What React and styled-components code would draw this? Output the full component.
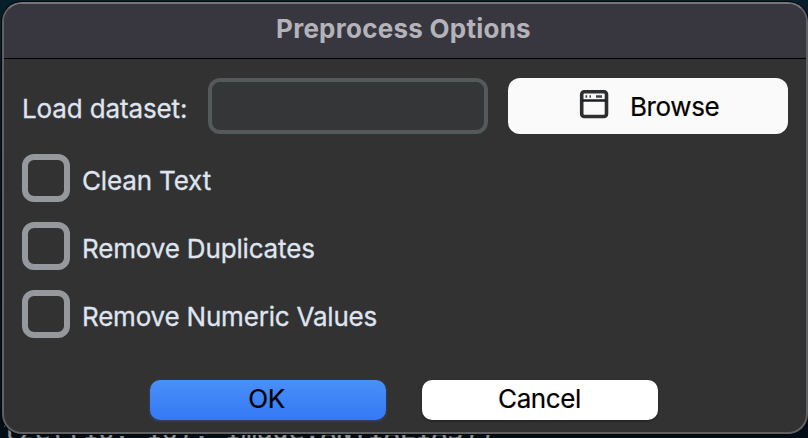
import React from "react";
import styled, { createGlobalStyle } from "styled-components";

const GlobalStyle = createGlobalStyle`
  * { box-sizing: border-box; }
  html, body { margin: 0; overflow: hidden; background: #04111b; }
  button { border: 0; padding: 0; font: inherit; }
`;

const Desktop = styled.main`
  position: relative;
  width: 808px;
  height: 438px;
  padding: 2px 0 4px 2px;
  overflow: hidden;
  background: linear-gradient(#071f2b 0, #06131c 50%, #020d15 100%);
  font-family: Inter, "Liberation Sans", sans-serif;
  font-size: 26px;
`;

const CodeLine = styled.pre`
  position: absolute;
  left: 3px;
  top: ${(p) => p.$top}px;
  margin: 0;
  color: #8d9194;
  font: 26px/26px "DejaVu Sans Mono", monospace;
  letter-spacing: 0.22px;
  -webkit-text-stroke: 0.4px #8d9194;
`;

const Dialog = styled.section`
  position: relative;
  display: flex;
  flex-direction: column;
  width: 806px;
  height: 432px;
  overflow: hidden;
  border: 2px solid #606162;
  border-top-color: #76767a;
  border-radius: 20px;
  background: #323232;
  box-shadow: 0 0 0 1px #02070a;
`;

const TitleBar = styled.header`
  display: flex;
  justify-content: center;
  height: 55px;
  flex: none;
  background: #383740;
  border-bottom: 1px solid #000;
`;

const Title = styled.h1`
  margin: 0;
  padding-right: 3px;
  color: #b4b3ba;
  font-size: 26px;
  line-height: 50px;
  font-weight: 700;
  letter-spacing: 0.25px;
`;

const Content = styled.div`
  display: flex;
  flex-direction: column;
  padding: 19px 16px 0 18px;
`;

const DatasetRow = styled.div`
  display: flex;
  height: 56px;
`;

const Label = styled.span`
  color: #dfe4f0;
  line-height: 54px;
  letter-spacing: ${(p) => p.$tracking}px;
  white-space: nowrap;
  -webkit-text-stroke: 0.3px #dfe4f0;
`;

const FieldLabel = styled.label`
  width: 186px;
  color: #dfe4f0;
  line-height: 61px;
  white-space: nowrap;
  letter-spacing: -0.13px;
  -webkit-text-stroke: 0.3px #dfe4f0;
`;

const PathInput = styled.input`
  width: 280px;
  height: 56px;
  margin-right: 20px;
  padding: 0 12px;
  border: 4px solid #54595b;
  border-radius: 12px;
  outline: 0;
  background: #353638;
  color: #dfe4f0;
  font: inherit;
`;

const BrowseButton = styled.button`
  display: flex;
  width: 280px;
  height: 56px;
  padding-left: 71px;
  border-radius: 12px;
  background: #fafafa;
  color: #000;
`;

const BrowseIcon = styled.svg`
  width: 30px;
  height: 30px;
  margin: 11px 21px 0 0;
`;

const Caption = styled.span`
  display: block;
  padding-right: ${(p) => p.$shift || 0}px;
  line-height: ${(p) => p.$line}px;
  letter-spacing: -0.4px;
  -webkit-text-stroke: 0.2px #000;
`;

const Options = styled.div`
  display: grid;
  gap: 20px;
  margin-top: 20px;
`;

const Option = styled.div`
  display: flex;
  height: 48px;
  gap: 12px;
`;

const Checkbox = styled.span`
  width: 48px;
  height: 48px;
  border: 6px solid #95999d;
  border-radius: 12px;
`;

const Actions = styled.footer`
  display: flex;
  gap: 36px;
  margin: 42px 0 0 128px;
`;

const ActionButton = styled.button`
  display: flex;
  justify-content: center;
  align-items: flex-start;
  width: 236px;
  height: 40px;
  border-radius: 10px;
  background: ${(p) => (p.$primary ? "linear-gradient(#4990f8, #3478f6)" : "#fff")};
  box-shadow: 0 1px 3px ${(p) => (p.$primary ? "#3478f655" : "#0006")};
  color: #000;
`;

const options = [
  ["Clean Text", -0.15],
  ["Remove Duplicates", -0.16],
  ["Remove Numeric Values", -0.2],
];

export default function App() {
  return (
    <>
      <GlobalStyle />
      <Desktop>
        <CodeLine $top={418}>{"tze((16, 16), Image.ANTIALIAS))"}</CodeLine>
        <Dialog>
          <TitleBar>
            <Title>Preprocess Options</Title>
          </TitleBar>
          <Content>
            <DatasetRow>
              <FieldLabel htmlFor="dataset">Load dataset:</FieldLabel>
              <PathInput id="dataset" />
              <BrowseButton>
                <BrowseIcon viewBox="0 0 30 30" fill="none">
                  <rect x="2.7" y="2.7" width="24.8" height="24.8" rx="2.5" stroke="#2c2e30" strokeWidth="3.6" />
                  <path d="M3 11.5H27" stroke="#1c1e20" strokeWidth="2.4" />
                  <path d="M6.5 7.5H8.2M10.5 7.5H12M17 7.5H23" stroke="#404244" strokeWidth="2.6" />
                </BrowseIcon>
                <Caption $line={58}>Browse</Caption>
              </BrowseButton>
            </DatasetRow>
            <Options>
              {options.map(([name, tracking]) => (
                <Option key={name}>
                  <Checkbox role="checkbox" aria-checked="false" aria-label={name} />
                  <Label $tracking={tracking}>{name}</Label>
                </Option>
              ))}
            </Options>
            <Actions>
              <ActionButton $primary><Caption $line={38} $shift={3}>OK</Caption></ActionButton>
              <ActionButton><Caption $line={38} $shift={1}>Cancel</Caption></ActionButton>
            </Actions>
          </Content>
        </Dialog>
      </Desktop>
    </>
  );
}
